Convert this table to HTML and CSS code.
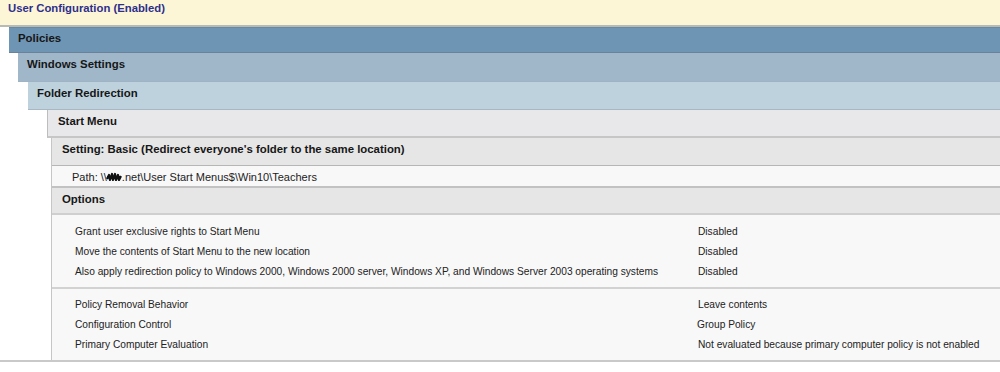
FILE: index.html
```html
<!DOCTYPE html>
<html>
<head>
<meta charset="utf-8">
<link rel="stylesheet" href="styles.css">
</head>
<body>
<div class="report">
  <div class="top">User Configuration (Enabled)</div>
  <div class="lvl1">
    <div class="hdr policies">Policies</div>
    <div class="lvl2">
      <div class="hdr winset">Windows Settings</div>
      <div class="lvl3">
        <div class="hdr folder">Folder Redirection</div>
        <div class="lvl4">
          <div class="hdr startmenu">Start Menu</div>
          <div class="lvl5">
            <div class="hdr setting">Setting: Basic (Redirect everyone's folder to the same location)</div>
            <div class="path">Path: \\<svg class="scribble" width="16" height="10" viewBox="0 0 16 10"><path d="M1 7 L3 3 L4 8 L6 2 L7 8 L9 2 L10 8 L12 3 L13 8 L15 4 M1 5 L15 5 M2 4 L14 6" fill="none" stroke="#111" stroke-width="2.2" stroke-linejoin="round"/></svg>.net\User Start Menus$\Win10\Teachers</div>
            <div class="hdr options">Options</div>
            <div class="group first">
              <div class="lbl">Grant user exclusive rights to Start Menu</div><div class="val">Disabled</div>
              <div class="lbl">Move the contents of Start Menu to the new location</div><div class="val">Disabled</div>
              <div class="lbl">Also apply redirection policy to Windows 2000, Windows 2000 server, Windows XP, and Windows Server 2003 operating systems</div><div class="val">Disabled</div>
            </div>
            <div class="group second">
              <div class="lbl">Policy Removal Behavior</div><div class="val">Leave contents</div>
              <div class="lbl">Configuration Control</div><div class="val vshift">Group Policy</div>
              <div class="lbl">Primary Computer Evaluation</div><div class="val">Not evaluated because primary computer policy is not enabled</div>
            </div>
          </div>
        </div>
      </div>
    </div>
  </div>
</div>
</body>
</html>
```
FILE: styles.css
```css
html, body {
  margin: 0;
  padding: 0;
  background: #ffffff;
}
body {
  font-family: "Liberation Sans", Arial, sans-serif;
  font-size: 10.2px;
  color: #1c1c1c;
}
.report {
  width: 1000px;
  border-bottom: 2px solid #c9c9c9;
}
.top {
  height: 27px;
  box-sizing: border-box;
  background: #fdf6d6;
  border-bottom: 2px solid #b8bbb3;
  color: #2d2f8c;
  font-weight: bold;
  font-size: 11.3px;
  line-height: 14px;
  padding: 1px 0 0 8px;
}
.hdr {
  font-weight: bold;
  font-size: 11.4px;
  line-height: 14px;
  box-sizing: border-box;
  color: #161616;
}
.lvl1 {
  margin-left: 9px;
}
.policies {
  height: 26px;
  background: #6e95b3;
  border-top: 1px solid #6789a4;
  border-bottom: 1px solid #6a8299;
  padding: 3px 0 0 9px;
}
.lvl2 {
  margin-left: 9px;
}
.winset {
  height: 29px;
  background: #a0b7ca;
  border-bottom: 1px solid #9fb3c4;
  padding: 4px 0 0 9px;
}
.lvl3 {
  margin-left: 10px;
}
.folder {
  height: 28px;
  background: #bed2dd;
  border-bottom: 1px solid #a9b6c4;
  padding: 4px 0 0 9px;
}
.lvl4 {
  margin-left: 19px;
}
.startmenu {
  height: 28px;
  background: #e8e7e9;
  border-left: 1px solid #bdbdbd;
  border-bottom: 2px solid #c6c6c6;
  padding: 4px 0 0 10px;
}
.lvl5 {
  margin-left: 4px;
  border-left: 1px solid #c6c6c6;
}
.setting {
  height: 28px;
  background: #e6e6e6;
  border-bottom: 1px solid #b6b6b6;
  padding: 4px 0 0 10px;
}
.path {
  height: 22px;
  box-sizing: border-box;
  background: #f8f8f8;
  border-bottom: 2px solid #c2c2c2;
  padding: 4px 0 0 20px;
  line-height: 14px;
  font-size: 11px;
  color: #222;
  white-space: nowrap;
}
.scribble {
  vertical-align: -1px;
  margin: 0 0 0 -1px;
}
.options {
  height: 27px;
  background: #e6e6e6;
  border-bottom: 2px solid #cfcfcf;
  padding: 4px 0 0 10px;
}
.group {
  display: grid;
  grid-template-columns: 623px 1fr;
  grid-auto-rows: 20px;
  background: #f8f8f8;
  padding-left: 23px;
  line-height: 20px;
  color: #222;
}
.group.first {
  padding-top: 7px;
  padding-bottom: 5px;
  border-bottom: 2px solid #d2d2d2;
}
.group.second {
  padding-top: 6px;
  padding-bottom: 5px;
}
.lbl, .val {
  white-space: nowrap;
}
.vshift {
  margin-left: -1px;
}
```
